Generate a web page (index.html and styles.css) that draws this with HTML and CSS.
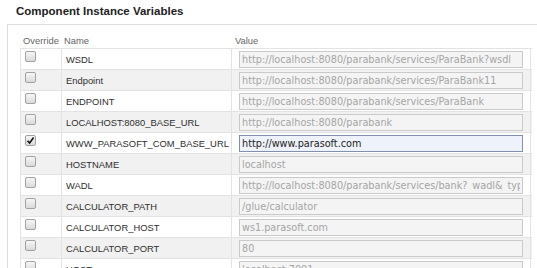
FILE: index.html
```html
<!DOCTYPE html>
<html>
	<head>
		<meta charset="UTF-8">
		<title>Component Instance Variables</title>
		<link rel="stylesheet" href="styles.css">
	</head>
	<body>
		<h3 class="title">Component Instance Variables</h3>
		<div class="panel">
			<div class="var-table">
				<div class="var-head">
					<div class="cell-override">Override</div>
					<div class="cell-name">Name</div>
					<div class="cell-value">Value</div>
				</div>
				<div class="var-row">
					<div class="cell-override"><span class="check"></span></div>
					<div class="cell-name">WSDL</div>
					<div class="cell-value"><input class="val" type="text" disabled value="http://localhost:8080/parabank/services/ParaBank?wsdl"></div>
				</div>
				<div class="var-row">
					<div class="cell-override"><span class="check"></span></div>
					<div class="cell-name">Endpoint</div>
					<div class="cell-value"><input class="val" type="text" disabled value="http://localhost:8080/parabank/services/ParaBank11"></div>
				</div>
				<div class="var-row">
					<div class="cell-override"><span class="check"></span></div>
					<div class="cell-name">ENDPOINT</div>
					<div class="cell-value"><input class="val" type="text" disabled value="http://localhost:8080/parabank/services/ParaBank"></div>
				</div>
				<div class="var-row">
					<div class="cell-override"><span class="check"></span></div>
					<div class="cell-name">LOCALHOST:8080_BASE_URL</div>
					<div class="cell-value"><input class="val" type="text" disabled value="http://localhost:8080/parabank"></div>
				</div>
				<div class="var-row">
					<div class="cell-override"><span class="check checked"><svg width="9" height="9" viewBox="0 0 9 9"><path d="M1.5 4.8 L3.6 7 L7.6 1.6" fill="none" stroke="#111" stroke-width="1.6"/></svg></span></div>
					<div class="cell-name">WWW_PARASOFT_COM_BASE_URL</div>
					<div class="cell-value"><input class="val active" type="text" value="http://www.parasoft.com"></div>
				</div>
				<div class="var-row">
					<div class="cell-override"><span class="check"></span></div>
					<div class="cell-name">HOSTNAME</div>
					<div class="cell-value"><input class="val" type="text" disabled value="localhost"></div>
				</div>
				<div class="var-row">
					<div class="cell-override"><span class="check"></span></div>
					<div class="cell-name">WADL</div>
					<div class="cell-value"><input class="val" type="text" disabled value="http://localhost:8080/parabank/services/bank?_wadl&amp;_type=xml"></div>
				</div>
				<div class="var-row">
					<div class="cell-override"><span class="check"></span></div>
					<div class="cell-name">CALCULATOR_PATH</div>
					<div class="cell-value"><input class="val" type="text" disabled value="/glue/calculator"></div>
				</div>
				<div class="var-row">
					<div class="cell-override"><span class="check"></span></div>
					<div class="cell-name">CALCULATOR_HOST</div>
					<div class="cell-value"><input class="val" type="text" disabled value="ws1.parasoft.com"></div>
				</div>
				<div class="var-row">
					<div class="cell-override"><span class="check"></span></div>
					<div class="cell-name">CALCULATOR_PORT</div>
					<div class="cell-value"><input class="val" type="text" disabled value="80"></div>
				</div>
				<div class="var-row">
					<div class="cell-override"><span class="check"></span></div>
					<div class="cell-name">HOST</div>
					<div class="cell-value"><input class="val" type="text" disabled value="localhost:7001"></div>
				</div>
			</div>
		</div>
	</body>
</html>
```

FILE: styles.css
```css
html, body {
	margin: 0;
	padding: 0;
	background: #fff;
	overflow: hidden;
}
body {
	font-family: "Liberation Sans", Arial, sans-serif;
	color: #333;
}
.title {
	margin: 0;
	height: 20px;
	padding: 4px 0 0 16px;
	font-size: 11.5px;
	line-height: 14px;
	font-weight: bold;
	color: #222;
}
.panel {
	width: 516px;
	margin-left: 7px;
	padding: 10px 3px 0 12px;
	border: 1px solid #dedede;
	border-bottom: none;
}

.var-head,
.var-row {
	display: grid;
	grid-template-columns: 41px 170px 299px;
	width: 511px;
	font-size: 9.4px;
}
.var-head {
	height: 13px;
	line-height: 12px;
	color: #666;
	border-left: 1px solid transparent;
}
.var-head .cell-override { padding-left: 2px; }
.var-head .cell-name { padding-left: 2px; }
.var-head .cell-value { padding-left: 3px; }

.var-row {
	height: 20px;
	border-top: 1px solid #e3e3e3;
	border-left: 1px solid #e3e3e3;
	background: #fff;
}
.var-row:nth-child(odd) {
	background: #f1f1f1;
}
.var-row > div {
	border-right: 1px solid #e3e3e3;
}
.var-row .cell-override {
	padding: 2px 0 0 4px;
}
.var-row .cell-name {
	padding: 1px 0 0 4px;
	line-height: 20px;
	color: #2e2e2e;
}
.var-row .cell-value {
	padding: 2px 0 0 7px;
}

.check {
	display: flex;
	align-items: center;
	justify-content: center;
	box-sizing: border-box;
	width: 11px;
	height: 11px;
	border: 1px solid #a2a2a2;
	border-radius: 2px;
	background: linear-gradient(#f6f6f6, #dadada);
}

.val {
	display: block;
	box-sizing: border-box;
	width: 284px;
	height: 17px;
	margin: 0;
	padding: 0 2px 1px;
	border: 1px solid #cacaca;
	border-radius: 0;
	background: #f4f4f4;
	color: #a5a5a5;
	font-family: "DejaVu Sans", Verdana, sans-serif;
	font-size: 9.7px;
	line-height: 14px;
	outline: none;
}
.val.active {
	background: #eef2fa;
	border-color: #8090ae;
	color: #222;
}
```
